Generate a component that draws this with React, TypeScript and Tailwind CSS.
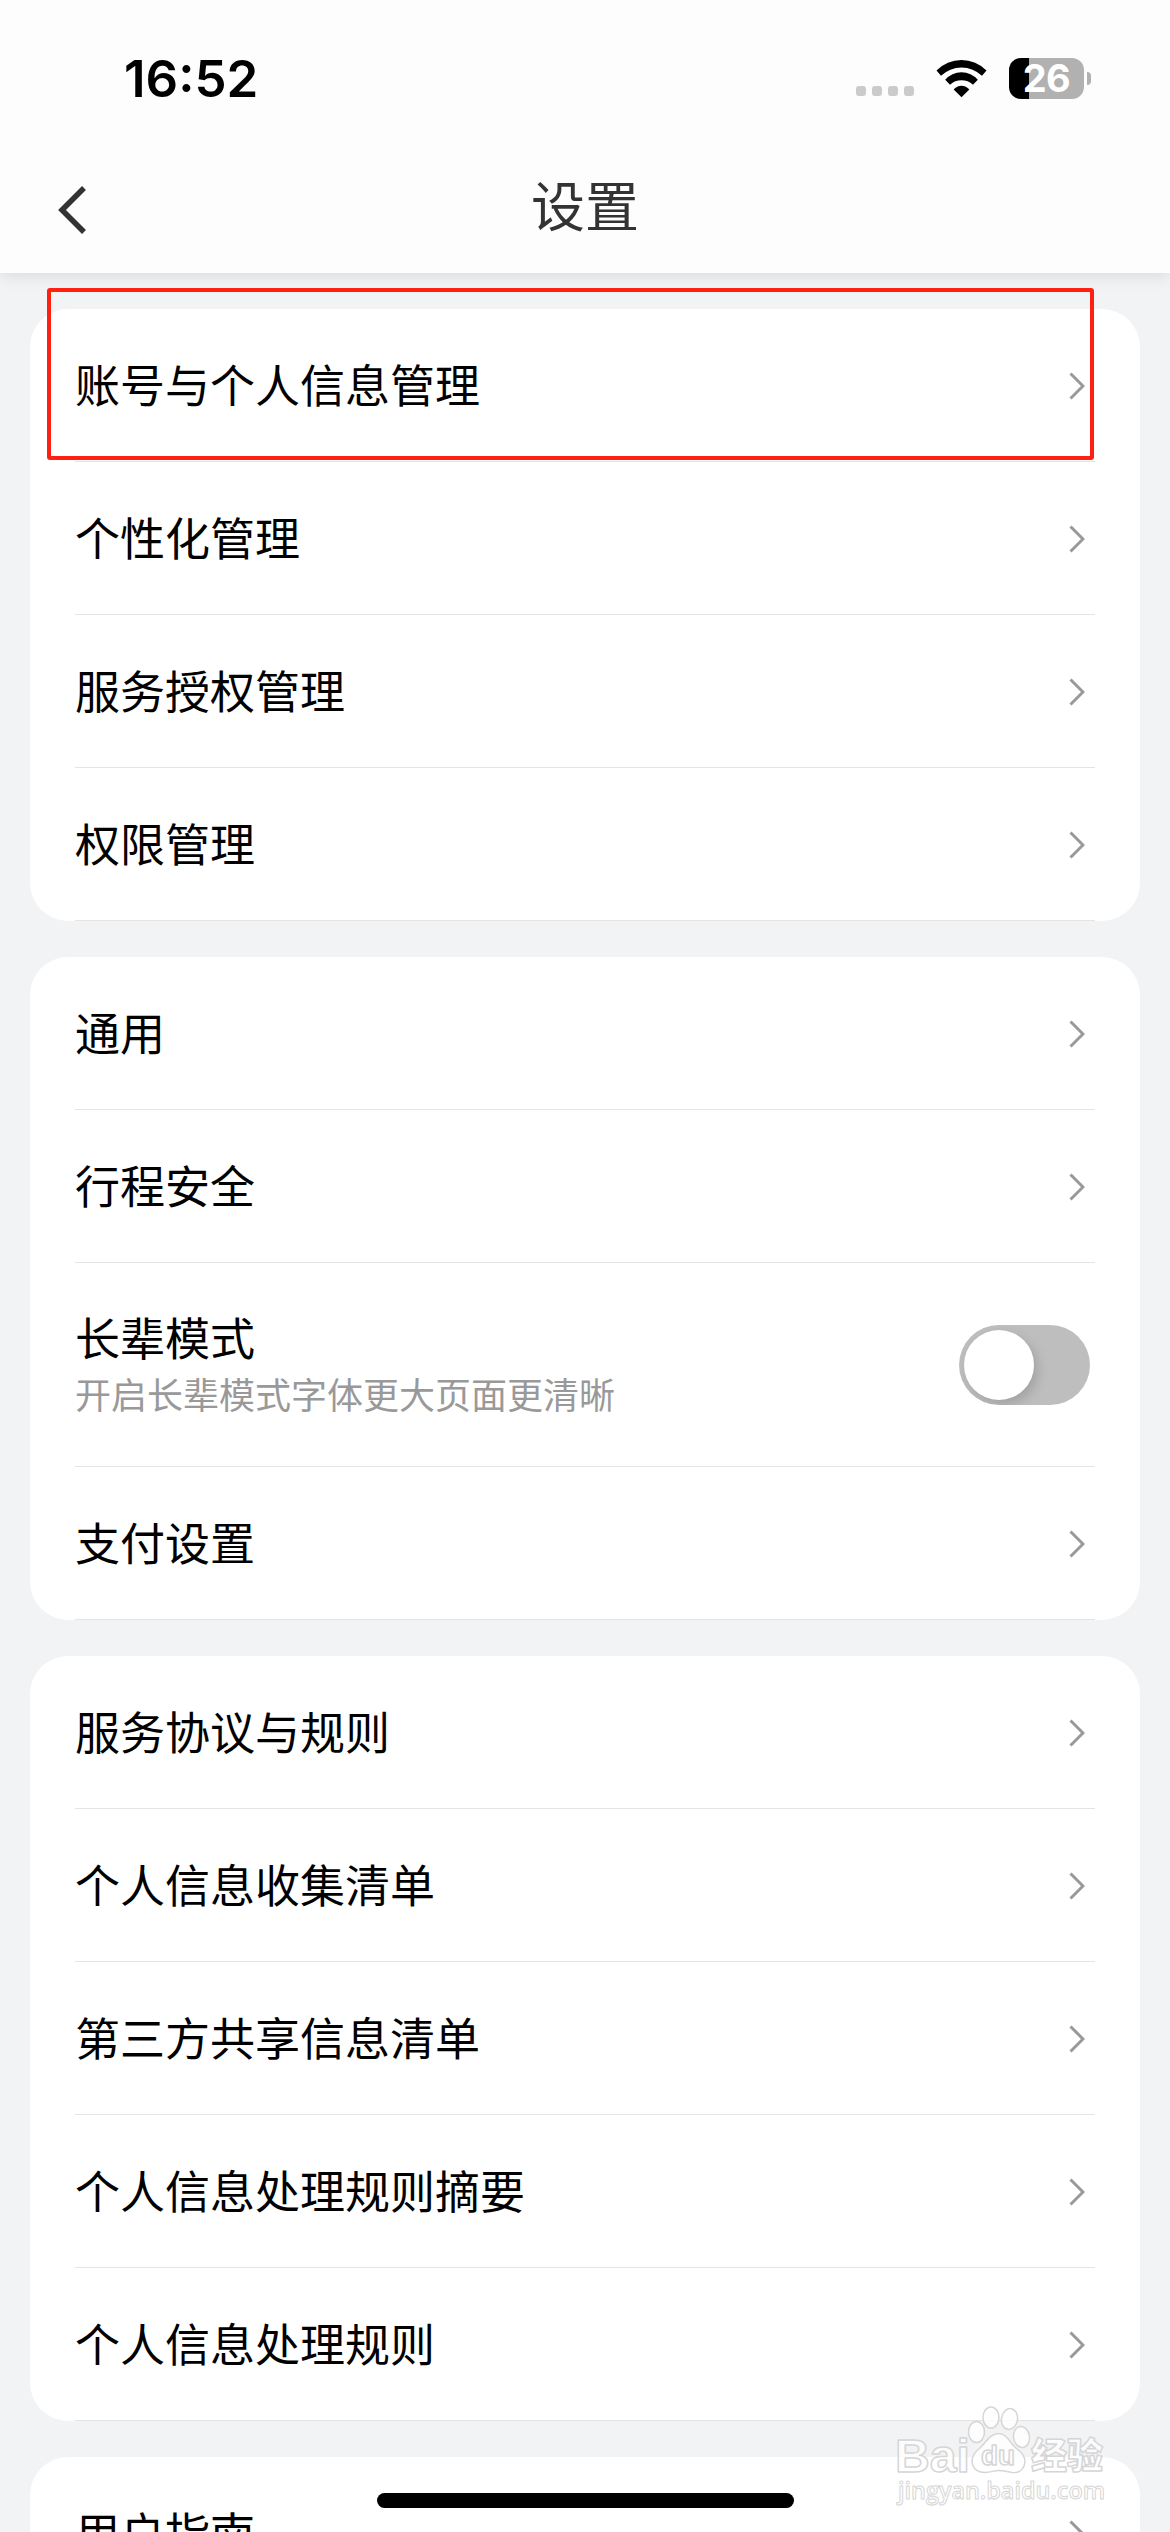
import { useState } from 'react';

interface SettingItem {
  label: string;
  hint?: string;
  toggle?: boolean;
}

const GROUPS: SettingItem[][] = [
  [
    { label: '账号与个人信息管理' },
    { label: '个性化管理' },
    { label: '服务授权管理' },
    { label: '权限管理' },
  ],
  [
    { label: '通用' },
    { label: '行程安全' },
    { label: '长辈模式', hint: '开启长辈模式字体更大页面更清晰', toggle: true },
    { label: '支付设置' },
  ],
  [
    { label: '服务协议与规则' },
    { label: '个人信息收集清单' },
    { label: '第三方共享信息清单' },
    { label: '个人信息处理规则摘要' },
    { label: '个人信息处理规则' },
  ],
  [{ label: '用户指南' }],
];

function WifiIcon() {
  return (
    <svg width="51" height="39" viewBox="0 0 51 39" fill="#000">
      <path d="M0.5 11.6 A35 35 0 0 1 50.5 11.6 L46 16.7 A30 30 0 0 0 5 16.7 Z" />
      <path d="M9.2 20.8 A21.5 21.5 0 0 1 41.8 20.8 L37 25.8 A17 17 0 0 0 14 25.8 Z" />
      <path d="M17.7 30.4 A10 10 0 0 1 33.3 30.4 L25.5 38.2 Z" />
    </svg>
  );
}

function BackIcon() {
  return (
    <svg width="28" height="48" viewBox="0 0 28 48" fill="none" stroke="#333" strokeWidth="5.5">
      <path d="M26 2 L4 24 L26 46" />
    </svg>
  );
}

function ChevronIcon() {
  return (
    <svg width="16" height="28" viewBox="0 0 16 28" fill="none" stroke="#999" strokeWidth="3">
      <path d="M1.5 1.5 L14 14 L1.5 26.5" />
    </svg>
  );
}

function Battery() {
  return (
    <div className="flex items-center gap-[3px]">
      <div className="flex h-[41px] w-[75px] items-center justify-center rounded-[12px] bg-linear-to-r from-black from-[20px] to-[#b1b1b1] to-[20px]">
        <span className="font-['Inter',sans-serif] text-[38px] leading-[41px] font-bold tracking-[-0.5px] text-white">26</span>
      </div>
      <div className="h-[13px] w-1 rounded-r-full bg-[#b1b1b1]" />
    </div>
  );
}

function StatusBar() {
  return (
    <div className="flex h-[156px] items-center justify-between pr-[79px] pl-[124px]">
      <span className="font-['Inter',sans-serif] text-[51px] leading-none font-semibold text-black">16:52</span>
      <div className="flex items-center">
        <div className="flex gap-1.5 pt-[26px]">
          <span className="size-2.5 rounded-[3px] bg-[#cbcbcb]" />
          <span className="size-2.5 rounded-[3px] bg-[#cbcbcb]" />
          <span className="size-2.5 rounded-[3px] bg-[#cbcbcb]" />
          <span className="size-2.5 rounded-[3px] bg-[#cbcbcb]" />
        </div>
        <div className="mx-[22px]">
          <WifiIcon />
        </div>
        <Battery />
      </div>
    </div>
  );
}

function NavBar() {
  return (
    <div className="grid h-[117px] grid-cols-[1fr_auto_1fr] items-start">
      <button className="pt-[30px] pl-[58px]" aria-label="返回">
        <BackIcon />
      </button>
      <h1 className="pt-[21px] text-[54px] leading-[54px] text-[#333]">设置</h1>
    </div>
  );
}

function Toggle() {
  const [on, setOn] = useState(false);
  return (
    <button
      role="switch"
      aria-checked={on}
      onClick={() => setOn((v) => !v)}
      className={`mt-px mr-[5px] flex h-20 w-[131px] items-center overflow-hidden rounded-full px-[5px] ${on ? 'justify-end bg-green-500' : 'bg-[#bebebe]'}`}
    >
      <span className="size-[70px] rounded-full bg-white shadow-[4px_5px_12px_rgba(0,0,0,0.15)]" />
    </button>
  );
}

function SettingRow({ item }: { item: SettingItem }) {
  return (
    <div
      className={`flex items-center justify-between border-b border-[#e4e4e4] ${item.hint ? 'h-[204px]' : 'h-[153px]'}`}
    >
      <div className="flex flex-col pb-[3px]">
        <span className="text-[45px] leading-[60px] text-black">{item.label}</span>
        {item.hint && <span className="text-[36px] leading-[52px] text-[#999]">{item.hint}</span>}
      </div>
      {item.toggle ? (
        <Toggle />
      ) : (
        <div className="pt-0.5 pr-2.5">
          <ChevronIcon />
        </div>
      )}
    </div>
  );
}

function Watermark() {
  return (
    <svg
      className="absolute right-[50px] bottom-0"
      width="230"
      height="137"
      viewBox="0 0 230 137"
      fill="#fff"
      fillOpacity="0.8"
      stroke="#d6d6d6"
      strokeWidth="1.5"
      strokeLinejoin="round"
    >
      <text x="5" y="76.5" textLength="75" lengthAdjust="spacingAndGlyphs" fontFamily="Liberation Sans, sans-serif" fontWeight="700" fontSize="47">
        Bai
      </text>
      <ellipse cx="86.5" cy="37" rx="8" ry="10.5" />
      <ellipse cx="101" cy="22.5" rx="8" ry="10.5" />
      <ellipse cx="119.5" cy="24" rx="8" ry="10.5" transform="rotate(10 119.5 24)" />
      <ellipse cx="131.5" cy="42" rx="8" ry="10.5" transform="rotate(-8 131.5 42)" />
      <path d="M108.500 38.500 C118 38.500 120 50 129 55.500 C140 65 134 79 122 77.500 C116 76 113 75.500 108.500 75.500 C104 75.500 101 77.500 95 77.500 C82 77.500 78 65 87 55.500 C95 50 99 38.500 108.500 38.500 Z" />
      <text x="91" y="70" textLength="34" lengthAdjust="spacingAndGlyphs" fontFamily="Liberation Sans, sans-serif" fontWeight="700" fontSize="27">
        du
      </text>
      <text x="141" y="74" textLength="72" lengthAdjust="spacingAndGlyphs" fontFamily="Noto Sans CJK SC, sans-serif" fontWeight="900" fontSize="36">
        经验
      </text>
      <text x="8" y="104" textLength="207" lengthAdjust="spacingAndGlyphs" fontFamily="Open Sans, sans-serif" fontWeight="600" fontSize="24" strokeWidth="1">
        jingyan.baidu.com
      </text>
    </svg>
  );
}

export default function App() {
  return (
    <div className="relative flex h-[2532px] w-[1170px] flex-col overflow-hidden bg-[#f2f3f5] font-['Noto_Sans_CJK_SC',sans-serif]">
      <header className="z-10 shrink-0 bg-[#fdfdfd] shadow-[0_3px_15px_rgba(0,0,0,0.1)]">
        <StatusBar />
        <NavBar />
      </header>

      <main className="flex flex-col gap-9 px-[30px] pt-9">
        {GROUPS.map((group, i) => (
          <section key={i} className="rounded-[38px] bg-white px-[45px]">
            {group.map((item) => (
              <SettingRow key={item.label} item={item} />
            ))}
          </section>
        ))}
      </main>

      {/* Highlight around the first row */}
      <div className="absolute top-[288px] left-[47px] z-20 h-[172px] w-[1047px] rounded-[3px] border-4 border-[#ff2012]" />

      <Watermark />

      {/* Home indicator */}
      <div className="absolute bottom-6 left-[377px] h-[15px] w-[417px] rounded-full bg-black" />
    </div>
  );
}
